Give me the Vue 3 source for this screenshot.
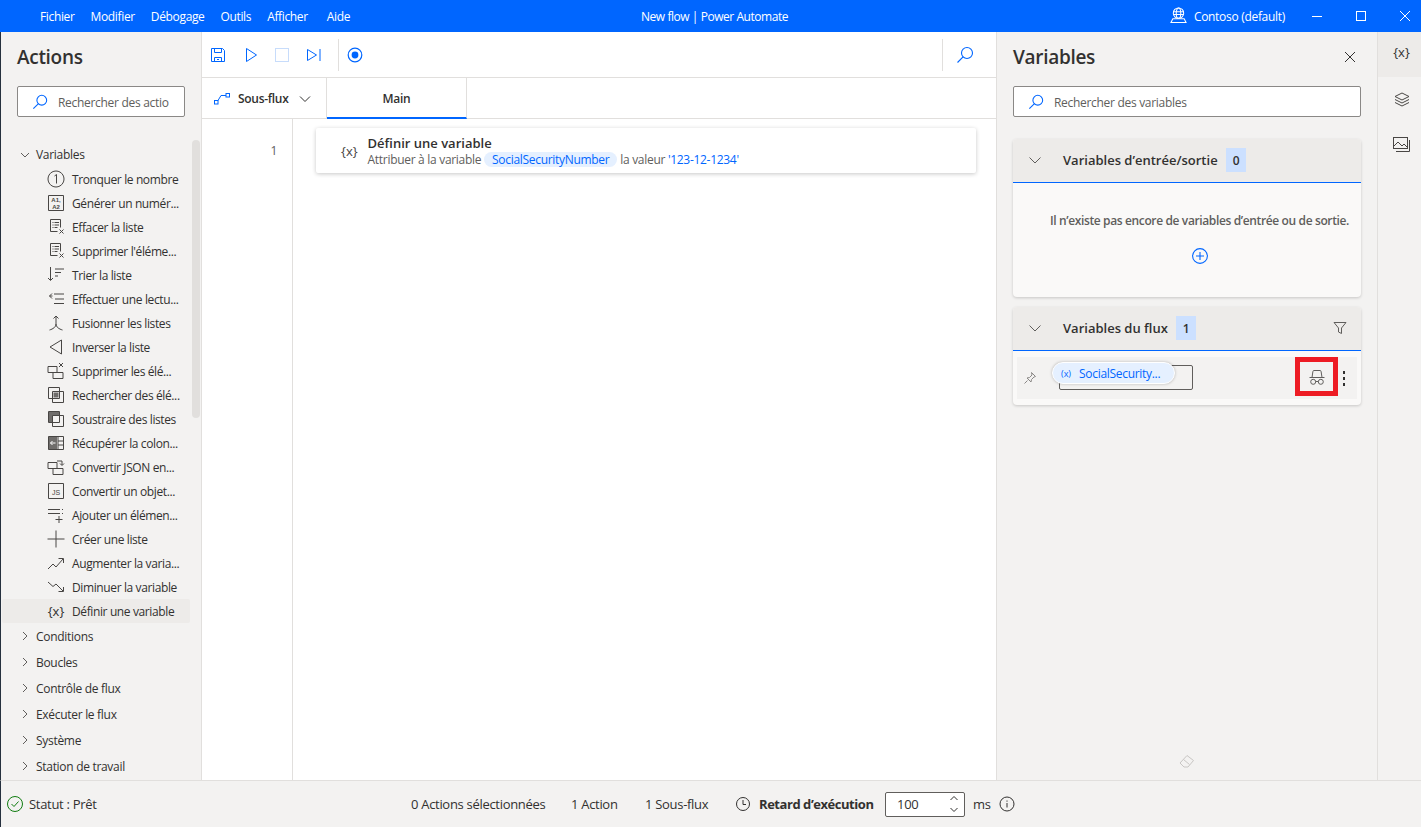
<template>
  <div class="app">
    <header class="titlebar">
      <nav class="menu">
        <span v-for="m in menus" :key="m">{{ m }}</span>
      </nav>
      <div class="window-title">New flow | Power Automate</div>
      <div class="title-right">
        <svg class="env-icon" width="17" height="17" viewBox="0 0 18 18" fill="none" stroke="#fff" stroke-width="1.1">
          <circle cx="9" cy="6.5" r="5.5" />
          <ellipse cx="9" cy="6.5" rx="2.4" ry="5.5" />
          <path d="M3.5 5h11M3.5 8h11M1 16.5l2-4h12l2 4z" />
        </svg>
        <span class="env-name">Contoso (default)</span>
        <div class="win-btns">
          <svg width="12" height="12" viewBox="0 0 12 12" stroke="#fff" fill="none"><path d="M1 6.5h10" /></svg>
          <svg width="12" height="12" viewBox="0 0 12 12" stroke="#fff" fill="none"><rect x="1.5" y="1.5" width="9" height="9" /></svg>
          <svg width="12" height="12" viewBox="0 0 12 12" stroke="#fff" fill="none"><path d="M1 1l10 10M11 1L1 11" /></svg>
        </div>
      </div>
    </header>

    <div class="main">
      <aside class="actions">
        <h2 class="panel-title">Actions</h2>
        <div class="search">
          <svg width="16" height="16" viewBox="0 0 18 18" fill="none" stroke="#0066ff" stroke-width="1.2"><circle cx="11" cy="7" r="5.5" /><path d="M7.3 10.7L1.5 16.5" /></svg>
          <span>Rechercher des actio</span>
        </div>
        <div class="tree">
          <div class="scrollthumb"></div>
          <div class="group open">
            <svg class="chev" width="10" height="10" viewBox="0 0 10 10" fill="none" stroke="#605e5c"><path d="M1 3l4 4 4-4" /></svg>
            Variables
          </div>
          <div v-for="it in items" :key="it.t" class="item" :class="{ selected: it.sel }">
            <span v-if="it.glyph" class="brace">{x}</span>
            <svg v-else width="18" height="18" viewBox="0 0 18 18" fill="none" stroke="#484644">
              <path v-if="it.f" :d="it.f" fill="#6f6d6b" stroke="none" />
              <path :d="it.d" />
              <path v-if="it.w" :d="it.w" stroke="#fff" />
              <text v-if="it.l" x="9" y="8" class="mini">{{ it.l }}</text>
              <text v-if="it.l2" x="9" y="14.5" class="mini">{{ it.l2 }}</text>
              <text v-if="it.js" x="9" y="13" class="mini js">JS</text>
            </svg>
            <span class="item-label">{{ it.t }}</span>
          </div>
          <div v-for="g in groups" :key="g" class="group closed">
            <svg class="chev" width="10" height="10" viewBox="0 0 10 10" fill="none" stroke="#605e5c"><path d="M3 1l4 4-4 4" /></svg>
            {{ g }}
          </div>
        </div>
      </aside>

      <section class="center">
        <div class="toolbar">
          <svg width="16" height="16" viewBox="0 0 16 16" fill="none" stroke="#0066ff"><path d="M1.5 1.5h11l2 2v11h-13zM4.5 1.5v4h7v-4M4.5 14.5v-4h7v4M7 12.5h2" /></svg>
          <svg class="t-play" width="16" height="16" viewBox="0 0 16 16" fill="none" stroke="#0066ff"><path d="M3.5 1.5l10 6.5-10 6.5z" /></svg>
          <svg class="t-stop" width="16" height="16" viewBox="0 0 16 16" fill="none" stroke="#c7dcfb"><rect x="1.5" y="1.5" width="13" height="13" /></svg>
          <svg class="t-next" width="16" height="16" viewBox="0 0 16 16" fill="none" stroke="#0066ff"><path d="M1.5 2.5l9 5.5-9 5.5zM14 2v12" /></svg>
          <div class="t-sep"></div>
          <svg width="16" height="16" viewBox="0 0 16 16" fill="none" stroke="#0066ff" stroke-width="1.2"><circle cx="8" cy="8" r="6.8" /><circle cx="8" cy="8" r="3.4" fill="#0066ff" stroke="none" /></svg>
          <div class="t-search">
            <svg width="18" height="18" viewBox="0 0 18 18" fill="none" stroke="#0066ff" stroke-width="1.1"><circle cx="11" cy="7" r="5.5" /><path d="M7.3 10.7L1.5 16.5" /></svg>
          </div>
        </div>
        <div class="tabs">
          <div class="subflow">
            <svg width="16" height="12" viewBox="0 0 16 12" fill="none" stroke="#0066ff"><rect x="0.5" y="7.5" width="3.5" height="3.5" /><rect x="12" y="0.5" width="3.5" height="3.5" /><path d="M4 7.5l3-5h5" /></svg>
            <span>Sous-flux</span>
            <svg width="12" height="12" viewBox="0 0 12 12" fill="none" stroke="#323130"><path d="M1 3.5l5 5 5-5" /></svg>
          </div>
          <div class="tab">Main</div>
        </div>
        <div class="editor">
          <div class="gutter">1</div>
          <div class="canvas">
            <div class="step">
              <span class="step-icon">{x}</span>
              <div class="step-text">
                <div class="step-title">Définir une variable</div>
                <div class="step-desc">
                  Attribuer à la variable
                  <span class="var-chip">SocialSecurityNumber</span>
                  la valeur
                  <span class="blue">'123-12-1234'</span>
                </div>
              </div>
            </div>
          </div>
        </div>
      </section>

      <aside class="variables">
        <div class="var-head">
          <h2 class="panel-title">Variables</h2>
          <svg width="12" height="12" viewBox="0 0 12 12" fill="none" stroke="#323130"><path d="M1 1l10 10M11 1L1 11" /></svg>
        </div>
        <div class="search wide">
          <svg width="16" height="16" viewBox="0 0 18 18" fill="none" stroke="#0066ff" stroke-width="1.2"><circle cx="11" cy="7" r="5.5" /><path d="M7.3 10.7L1.5 16.5" /></svg>
          <span>Rechercher des variables</span>
        </div>

        <div class="card first">
          <div class="card-head">
            <svg width="14" height="14" viewBox="0 0 14 14" fill="none" stroke="#605e5c"><path d="M1.5 4.5L7 10l5.5-5.5" /></svg>
            <span class="card-title">Variables d’entrée/sortie</span>
            <span class="count">0</span>
          </div>
          <div class="card-empty">
            <p>Il n’existe pas encore de variables d’entrée ou de sortie.</p>
            <svg width="16" height="16" viewBox="0 0 16 16" fill="none" stroke="#0066ff" stroke-width="1.1"><circle cx="8" cy="8" r="7.4" /><path d="M8 4v8M4 8h8" /></svg>
          </div>
        </div>

        <div class="card">
          <div class="card-head">
            <svg width="14" height="14" viewBox="0 0 14 14" fill="none" stroke="#605e5c"><path d="M1.5 4.5L7 10l5.5-5.5" /></svg>
            <span class="card-title">Variables du flux</span>
            <span class="count">1</span>
            <svg class="filter" width="14" height="14" viewBox="0 0 14 14" fill="none" stroke="#605e5c"><path d="M1 1.5h12L8.5 7v5.5l-3-1.5V7z" /></svg>
          </div>
          <div class="card-list">
            <div class="var-row">
              <svg width="14" height="14" viewBox="0 0 14 14" fill="none" stroke="#8a8886"><path d="M8.5 1.5l4 4-1.5.5-2.5 2.5-.5 2.5-4-4 2.5-.5L9 4zM4.5 9.5L1.5 12.5" /></svg>
              <div class="var-slot">
                <div class="var-box"></div>
                <div class="var-pill"><span class="x">(x)</span>SocialSecurity...</div>
              </div>
              <div class="spy-wrap">
                <svg width="16" height="16" viewBox="0 0 16 16" fill="none" stroke="#605e5c"><path d="M0.5 8.5h15M3 8.5l.9-6c.1-.7.5-1 1.1-1h6c.6 0 1 .3 1.1 1l.9 6" /><circle cx="4.2" cy="12.8" r="2.5" /><circle cx="11.8" cy="12.8" r="2.5" /><path d="M6.7 12.5h2.6" /></svg>
              </div>
              <div class="kebab"><i></i><i></i><i></i></div>
            </div>
          </div>
        </div>

        <div class="eraser">
          <svg width="16" height="14" viewBox="0 0 16 14" fill="none" stroke="#c8c6c4"><path d="M1 9l7-7.5 6.5 5L9 13H5zM4.5 5.5l6 5" /></svg>
        </div>
      </aside>

      <aside class="rail">
        <div class="rail-btn on"><span class="brace">{x}</span></div>
        <div class="rail-btn">
          <svg width="16" height="16" viewBox="0 0 16 16" fill="none" stroke="#484644"><path d="M8 1l7 3.5-7 3.5-7-3.5zM1 7.5L8 11l7-3.5M1 10.5L8 14l7-3.5" /></svg>
        </div>
        <div class="rail-btn">
          <svg width="17" height="15" viewBox="0 0 17 15" fill="none" stroke="#484644"><rect x="0.5" y="0.5" width="14" height="11" /><path d="M3 14.5h13.5V3M1 9l4-4 4 4 2-2 3 3" /></svg>
        </div>
      </aside>
    </div>

    <footer class="statusbar">
      <div class="status">
        <svg width="16" height="16" viewBox="0 0 16 16" fill="none" stroke="#107c10"><circle cx="8" cy="8" r="7.5" /><path d="M4.5 8l2.5 2.5 4.5-5" /></svg>
        <span>Statut : Prêt</span>
      </div>
      <div class="status-mid">
        <span>0 Actions sélectionnées</span>
        <span>1 Action</span>
        <span>1 Sous-flux</span>
        <svg class="clock" width="14" height="14" viewBox="0 0 14 14" fill="none" stroke="#323130"><circle cx="7" cy="7" r="6.5" /><path d="M7 3v4.5H10" /></svg>
        <b>Retard d’exécution</b>
        <div class="delay">
          <span>100</span>
          <svg width="10" height="20" viewBox="0 0 10 20" fill="none" stroke="#323130"><path d="M1.5 6L5 2.5 8.5 6M1.5 14L5 17.5 8.5 14" /></svg>
        </div>
        <span class="ms">ms</span>
        <svg class="info" width="16" height="16" viewBox="0 0 16 16" fill="none" stroke="#323130"><circle cx="8" cy="8" r="7" /><path d="M8 7v4.5M8 4.5v1.2" /></svg>
      </div>
    </footer>
  </div>
</template>

<script setup>
const menus = ['Fichier', 'Modifier', 'Débogage', 'Outils', 'Afficher', 'Aide']

// icones dessinees dans une grille de 18x18
const listX = 'M3.5 1.5h10v8M3.5 1.5v12h7M5.5 4.5h1M7.5 4.5h4.5M5.5 7h1M7.5 7h4.5M5.5 9.5h1M7.5 9.5h3M12.5 11.5l4 4M16.5 11.5l-4 4'
const items = [
  { t: 'Tronquer le nombre', d: 'M9 1a8 8 0 1 0 .01 0zM7.5 6L9.5 4.5V13.5' },
  { t: 'Générer un numér...', d: 'M1.5 1.5h15v15h-15z', l: 'A1,', l2: 'A2' },
  { t: 'Effacer la liste', d: listX },
  { t: "Supprimer l'éléme...", d: listX },
  { t: 'Trier la liste', d: 'M3.5 1v13M1 12l2.5 2.5L6 12M8 3h9M8 6.5h6M8 10h3' },
  { t: 'Effectuer une lectu...', d: 'M7 4h10M8 9h9M7 13.5h10M5 3.5L2.5 6 5 8.5M2.5 6H5.5' },
  { t: 'Fusionner les listes', d: 'M9 2v8M6.5 4.5L9 2l2.5 2.5M2.5 16C6 15 9 13 9 10c0 3 3 5 6.5 6' },
  { t: 'Inverser la liste', d: 'M14.5 2v14L3 9z' },
  { t: 'Supprimer les élé...', d: 'M1 4.5h9v6H1zM6 10.5h10v6H6zM12 1l4 4M16 1l-4 4' },
  { t: 'Rechercher des élé...', d: 'M1.5 1.5h11v11h-11zM5.5 5.5h11v11h-11z', f: 'M6.5 6.5h5v5h-5z' },
  { t: 'Soustraire des listes', d: 'M1.5 1.5h11v11h-11zM5.5 5.5h11v11h-11z', f: 'M2 2h10v3.5H5.5V12H2z' },
  { t: 'Récupérer la colon...', d: 'M1.5 2.5h15v13h-15zM11 2.5v13M11 7h5.5M11 11h5.5', f: 'M1.5 2.5H10v13H1.5z', w: 'M8.5 9H3.5M5.5 7l-2 2 2 2' },
  { t: 'Convertir JSON en...', d: 'M1 4.5h9v6H1zM6 10.5h10v6H6zM10 3h5v4M13 5.5l2 2 2-2' },
  { t: 'Convertir un objet...', d: 'M1.5 1.5h15v15h-15z', js: true },
  { t: 'Ajouter un élémen...', d: 'M1 3.5h12M1 7.5h12M15.5 3v1M15.5 7v1M12 10v7M8.5 13.5h7' },
  { t: 'Créer une liste', d: 'M9 0.5v17M0.5 9h17' },
  { t: 'Augmenter la varia...', d: 'M1 15l5-5 3 3 7-8M11.5 4.5H16.5V9' },
  { t: 'Diminuer la variable', d: 'M1 4l5 4.5 3-2.5 7 7M16.5 9V13.5H11.5' },
  { t: 'Définir une variable', glyph: true, sel: true }
]
const groups = ['Conditions', 'Boucles', 'Contrôle de flux', 'Exécuter le flux', 'Système', 'Station de travail']
</script>

<style>
html, body { margin: 0; overflow: hidden; }
</style>

<style scoped>
.app {
  width: 1421px;
  height: 827px;
  display: flex;
  flex-direction: column;
  font-family: "Open Sans", "Liberation Sans", sans-serif;
  font-size: 12px;
  letter-spacing: -0.3px;
  color: #323130;
  background: #f3f2f1;
  overflow: hidden;
}
svg { display: block; flex: none; }

.titlebar {
  height: 32px;
  flex: none;
  background: #0066ff;
  color: #fff;
  display: flex;
  align-items: center;
  position: relative;
}
.menu { display: flex; gap: 16px; padding: 1px 0 0 40px; letter-spacing: -0.35px; }
.menu span:last-child { margin-left: 3px; }
.window-title {
  position: absolute;
  left: 641px;
  top: 8px;
  letter-spacing: -0.45px;
}
.title-right { margin-left: auto; display: flex; align-items: center; }
.env-name { margin-left: 7px; padding-top: 1px; }
.env-icon { margin-top: -1px; }
.win-btns { display: flex; gap: 32px; margin-left: 26px; margin-right: 10px; }

.main { flex: 1; display: flex; min-height: 0; border-left: 1px solid #25303e; }

.panel-title {
  margin: 0;
  font-size: 19px;
  font-weight: 600;
  line-height: 28px;
  letter-spacing: -0.3px;
}

.actions {
  width: 201px;
  flex: none;
  box-sizing: border-box;
  border-right: 1px solid #e1dfdd;
  padding: 11px 0 0;
  display: flex;
  flex-direction: column;
}
.actions .panel-title { padding-left: 16px; }

.search {
  margin: 15px 0 0 16px;
  width: 168px;
  height: 31px;
  box-sizing: border-box;
  background: #fff;
  border: 1px solid #8a8886;
  border-radius: 2px;
  display: flex;
  align-items: center;
  gap: 10px;
  padding-left: 14px;
  color: #605e5c;
  flex: none;
  white-space: nowrap;
  overflow: hidden;
}
.search span { padding-top: 2px; }
.search.wide { width: 348px; margin-left: 0; }

.tree {
  margin-top: 20px;
  padding-top: 6px;
  position: relative;
  flex: 1;
  overflow: hidden;
}
.scrollthumb {
  position: absolute;
  left: 191px;
  top: 3px;
  width: 8px;
  height: 278px;
  border-radius: 4px;
  background: #e1dfdd;
}
.group {
  display: flex;
  align-items: center;
  height: 26px;
  padding-left: 19px;
  gap: 6px;
  font-size: 12px;
  font-weight: 400;
}
.group.open { height: 24px; box-sizing: border-box; padding-bottom: 1px; }
.item {
  display: flex;
  align-items: center;
  height: 24px;
  padding-left: 46px;
  gap: 7px;
  white-space: nowrap;
  letter-spacing: -0.38px;
}
.item-label { padding-top: 1px; }
.item.selected { background: #edebe9; margin: 0 11px 0 1px; padding-left: 45px; border-radius: 2px; }
.brace { width: 18px; text-align: center; font-size: 13px; color: #323130; letter-spacing: 0; }
.mini { font: 700 6px "Liberation Sans", sans-serif; fill: #484644; stroke: none; text-anchor: middle; letter-spacing: 0; }
.js { font-size: 7px; font-weight: 400; }

.center {
  width: 794px;
  flex: none;
  background: #fff;
  display: flex;
  flex-direction: column;
  box-sizing: border-box;
}
.toolbar {
  height: 46px;
  flex: none;
  box-sizing: border-box;
  border-bottom: 1px solid #e1dfdd;
  display: flex;
  align-items: center;
  padding-left: 8px;
}
.t-play { margin-left: 17px; }
.t-stop { margin-left: 15px; }
.t-next { margin-left: 16px; }
.t-sep { width: 1px; height: 32px; background: #e1dfdd; margin: 0 8px 0 16px; }
.t-search {
  margin-left: auto;
  width: 54px;
  height: 32px;
  box-sizing: border-box;
  border-left: 1px solid #e1dfdd;
  display: flex;
  align-items: center;
  padding-left: 13px;
}
.tabs {
  height: 41px;
  flex: none;
  box-sizing: border-box;
  border-bottom: 1px solid #e1dfdd;
  display: flex;
}
.subflow {
  width: 125px;
  box-sizing: border-box;
  display: flex;
  align-items: center;
  padding: 1px 0 0 12px;
  gap: 8px;
  border-right: 1px solid #e1dfdd;
  font-weight: 600;
}
.subflow svg:last-child { margin-left: 3px; }
.tab {
  width: 140px;
  box-sizing: border-box;
  border-right: 1px solid #e1dfdd;
  border-bottom: 2px solid #0066ff;
  margin-bottom: -1px;
  padding-top: 1px;
  display: flex;
  align-items: center;
  justify-content: center;
  font-weight: 600;
}
.editor { flex: 1; display: flex; min-height: 0; }
.gutter {
  width: 91px;
  flex: none;
  box-sizing: border-box;
  border-right: 1px solid #e1dfdd;
  text-align: right;
  padding: 24px 15px 0 0;
  color: #605e5c;
  line-height: 16px;
}
.canvas { flex: 1; padding: 9px 20px 0 23px; }
.step {
  height: 45px;
  box-sizing: border-box;
  background: #fff;
  box-shadow: 0 1px 4px rgba(0, 0, 0, 0.22);
  border-radius: 2px;
  display: flex;
  align-items: center;
  padding-left: 25px;
  gap: 10px;
}
.step-icon { font-size: 13px; letter-spacing: 0; color: #484644; }
.step-text { padding-top: 1px; }
.step-title { font-size: 13px; font-weight: 600; line-height: 17px; letter-spacing: 0; }
.step-desc { color: #605e5c; line-height: 15px; white-space: nowrap; }
.var-chip {
  display: inline-block;
  background: #e5f0ff;
  color: #0066ff;
  border-radius: 8px;
  padding: 0 8px;
  line-height: 15px;
}
.blue { color: #0066ff; }

.variables {
  width: 381px;
  flex: none;
  box-sizing: border-box;
  border-left: 1px solid #e1dfdd;
  padding: 11px 16px 0 16px;
  display: flex;
  flex-direction: column;
}
.var-head { display: flex; align-items: center; justify-content: space-between; padding-right: 5px; }
.variables .search { margin-left: 0; }
.card {
  background: #faf9f8;
  border-radius: 4px;
  box-shadow: 0 1px 3px rgba(0, 0, 0, 0.18);
  margin-top: 10px;
  overflow: hidden;
}
.card.first { margin-top: 22px; }
.card-head {
  height: 44px;
  box-sizing: border-box;
  background: #edebe9;
  border-bottom: 1px solid #0066ff;
  display: flex;
  align-items: center;
  padding: 0 14px 1px 15px;
}
.card-title { font-size: 13px; font-weight: 600; margin-left: 21px; letter-spacing: 0; }
.count {
  margin-left: 8px;
  padding: 0 7px;
  height: 24px;
  background: #cce0ff;
  display: flex;
  align-items: center;
  justify-content: center;
  font-weight: 600;
}
.filter { margin-left: auto; }
.card-empty {
  height: 114px;
  box-sizing: border-box;
  display: flex;
  flex-direction: column;
  align-items: center;
  padding-top: 30px;
}
.card-empty p {
  align-self: flex-start;
  margin: 0 0 19px;
  font-weight: 600;
  color: #605e5c;
  padding-left: 37px;
  white-space: nowrap;
  line-height: 16px;
  letter-spacing: -0.37px;
}
.card-empty svg { margin-left: 26px; }
.card-list { padding: 6px 4px; }
.var-row {
  height: 42px;
  background: #f3f2f1;
  display: flex;
  align-items: center;
  padding-left: 6px;
  position: relative;
}
.var-slot { position: relative; width: 146px; height: 42px; margin-left: 15px; }
.var-box {
  position: absolute;
  left: 7px;
  top: 8px;
  width: 134px;
  height: 25px;
  box-sizing: border-box;
  border: 1px solid #605e5c;
  border-radius: 2px;
}
.var-pill {
  position: absolute;
  left: 0;
  top: 5px;
  width: 123px;
  height: 22px;
  box-sizing: border-box;
  border-radius: 11px;
  background: #e5f0ff;
  box-shadow: 0 0 3px rgba(0, 0, 0, 0.25);
  border: 1px solid #fff;
  color: #0066ff;
  display: flex;
  align-items: center;
  padding-left: 8px;
  white-space: nowrap;
}
.x { font-size: 9px; margin-right: 8px; letter-spacing: 0; }
.spy-wrap {
  position: absolute;
  left: 278px;
  top: 0;
  width: 43px;
  height: 39px;
  box-sizing: border-box;
  border: 5px solid #ed1c24;
  display: flex;
  align-items: center;
  justify-content: center;
}
.kebab {
  position: absolute;
  left: 326px;
  top: 14px;
  display: flex;
  flex-direction: column;
  gap: 3px;
}
.kebab i { width: 2px; height: 3px; background: #323130; display: block; }
.eraser { margin-top: auto; height: 26px; display: flex; justify-content: center; }

.rail {
  flex: 1;
  box-sizing: border-box;
  border-left: 1px solid #e1dfdd;
  display: flex;
  flex-direction: column;
}
.rail-btn { height: 45px; display: flex; align-items: center; justify-content: center; padding-left: 4px; }
.rail-btn.on { background: #edebe9; padding-bottom: 5px; box-sizing: border-box; }

.statusbar {
  height: 47px;
  flex: none;
  box-sizing: border-box;
  border-top: 1px solid #e1dfdd;
  border-left: 1px solid #25303e;
  display: flex;
  align-items: center;
  background: #f3f2f1;
  font-size: 13px;
}
.status { display: flex; align-items: center; gap: 6px; padding-left: 6px; width: 410px; box-sizing: border-box; }
.status-mid { display: flex; align-items: center; }
.status-mid > span:nth-child(1) { width: 160px; }
.status-mid > span:nth-child(2) { width: 74px; }
.status-mid > span:nth-child(3) { width: 91px; }
.clock { margin: 0 9px 0 0; }
.status-mid b { font-weight: 700; width: 126px; white-space: nowrap; letter-spacing: -0.45px; }
.delay {
  width: 80px;
  height: 25px;
  box-sizing: border-box;
  border: 1px solid #605e5c;
  border-radius: 2px;
  background: #fff;
  display: flex;
  align-items: center;
  justify-content: space-between;
  padding: 0 5px 0 11px;
}
.ms { margin-left: 8px; }
.info { margin-left: 8px; }
</style>
